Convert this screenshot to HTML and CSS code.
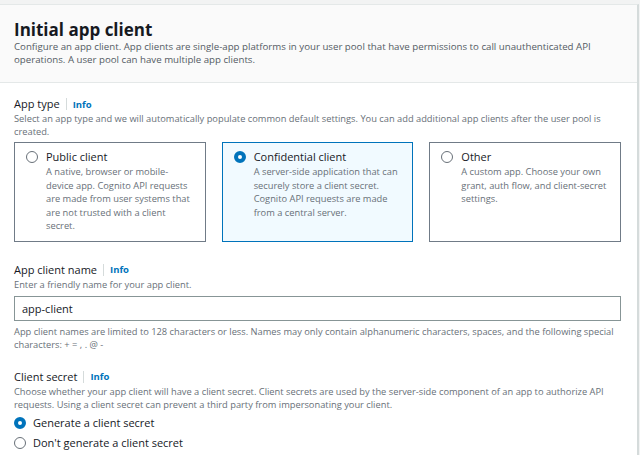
FILE: index.html
```html
<!DOCTYPE html>
<html lang="en">
<head>
<meta charset="utf-8">
<title>Initial app client</title>
<link rel="stylesheet" href="styles.css">
</head>
<body>
<div class="container">
  <div class="header">
    <h2 class="title">Initial app client</h2>
    <p class="header-desc">Configure an app client. App clients are single-app platforms in your user pool that have permissions to call unauthenticated API operations. A user pool can have multiple app clients.</p>
  </div>
  <div class="content">
    <div class="field field-type">
      <div class="label-row"><span class="label">App type</span><span class="sep"></span><a class="info">Info</a></div>
      <p class="desc">Select an app type and we will automatically populate common default settings. You can add additional app clients after the user pool is created.</p>
      <div class="tiles">
        <div class="tile">
          <span class="radio"></span>
          <div class="tile-text">
            <div class="tile-title">Public client</div>
            <div class="tile-desc">A native, browser or mobile-device app. Cognito API requests are made from user systems that are not trusted with a client secret.</div>
          </div>
        </div>
        <div class="tile tile-selected">
          <span class="radio radio-checked"></span>
          <div class="tile-text">
            <div class="tile-title">Confidential client</div>
            <div class="tile-desc">A server-side application that can securely store a client secret. Cognito API requests are made from a central server.</div>
          </div>
        </div>
        <div class="tile">
          <span class="radio"></span>
          <div class="tile-text">
            <div class="tile-title">Other</div>
            <div class="tile-desc">A custom app. Choose your own grant, auth flow, and client-secret settings.</div>
          </div>
        </div>
      </div>
    </div>

    <div class="field field-name">
      <div class="label-row"><span class="label">App client name</span><span class="sep"></span><a class="info">Info</a></div>
      <p class="desc">Enter a friendly name for your app client.</p>
      <div class="input">app-client</div>
      <p class="desc constraint">App client names are limited to 128 characters or less. Names may only contain alphanumeric characters, spaces, and the following special characters: + = , . @ -</p>
    </div>

    <div class="field field-secret">
      <div class="label-row"><span class="label">Client secret</span><span class="sep"></span><a class="info">Info</a></div>
      <p class="desc">Choose whether your app client will have a client secret. Client secrets are used by the server-side component of an app to authorize API requests. Using a client secret can prevent a third party from impersonating your client.</p>
      <div class="option"><span class="radio radio-checked"></span><span class="option-label">Generate a client secret</span></div>
      <div class="option"><span class="radio"></span><span class="option-label">Don't generate a client secret</span></div>
    </div>
  </div>
</div>
</body>
</html>
```

FILE: styles.css
```css
* { box-sizing: border-box; }
html, body { margin: 0; padding: 0; }
body {
  background: #f2f3f3;
  font-family: "Open Sans", "Noto Sans", sans-serif;
  color: #16191f;
  height: 455px;
  overflow: hidden;
}
.container {
  margin-top: 4px;
  margin-left: -1px;
  width: 640px;
  height: 451px;
  background: #ffffff;
  border-top: 1px solid #e4e8e8;
  border-right: 2px solid #d5dbdb;
  overflow: hidden;
}
.header {
  background: #fafafa;
  border-bottom: 1px solid #e4e8e8;
  padding: 15px 16px 16px 15px;
}
.title {
  margin: 0;
  font-size: 17px;
  line-height: 20px;
  font-weight: 700;
  color: #16191f;
}
.header-desc {
  margin: 0;
  font-size: 9.7px;
  line-height: 13px;
  color: #545b64;
}
.content {
  padding: 0 16px 0 15px;
}
.label-row {
  display: flex;
  align-items: center;
  height: 16px;
}
.label {
  font-size: 11px;
  line-height: 16px;
}
.sep {
  width: 1px;
  height: 12px;
  background: #d5dbdb;
  margin: 0 6px;
}
.info {
  font-size: 9.5px;
  font-weight: 700;
  color: #0073bb;
}
.desc {
  margin: 0;
  font-size: 9.3px;
  line-height: 13px;
  color: #687078;
}
.field-type { padding-top: 13px; }
.tiles {
  margin-top: 4px;
  display: grid;
  grid-template-columns: 1fr 1fr 1fr;
  gap: 16px;
}
.tile {
  display: flex;
  align-items: flex-start;
  gap: 8px;
  border: 1px solid #707b87;
  padding: 6px 10px 8px 11px;
  background: #fff;
}
.tile-selected {
  border-color: #0073bb;
  background: #f1faff;
}
.radio {
  flex: none;
  width: 12px;
  height: 12px;
  border-radius: 50%;
  border: 1px solid #687078;
  background: #fff;
  margin-top: 2px;
}
.radio-checked {
  border: 4px solid #0073bb;
}
.tile-title {
  font-size: 11px;
  line-height: 16px;
}
.tile-desc {
  font-size: 9.3px;
  line-height: 13.5px;
  color: #687078;
}
.field-name { padding-top: 20px; }
.input {
  margin-top: 5px;
  height: 25px;
  border: 1px solid #879596;
  padding: 0 7px;
  font-size: 11px;
  line-height: 23px;
}
.constraint { margin-top: 4px; }
.field-secret { padding-top: 18px; }
.field-secret .desc { margin-bottom: 2px; }
.option {
  display: flex;
  align-items: center;
  gap: 7px;
  height: 20px;
}
.option .radio { margin-top: 0; }
.option-label { font-size: 11px; }
```
